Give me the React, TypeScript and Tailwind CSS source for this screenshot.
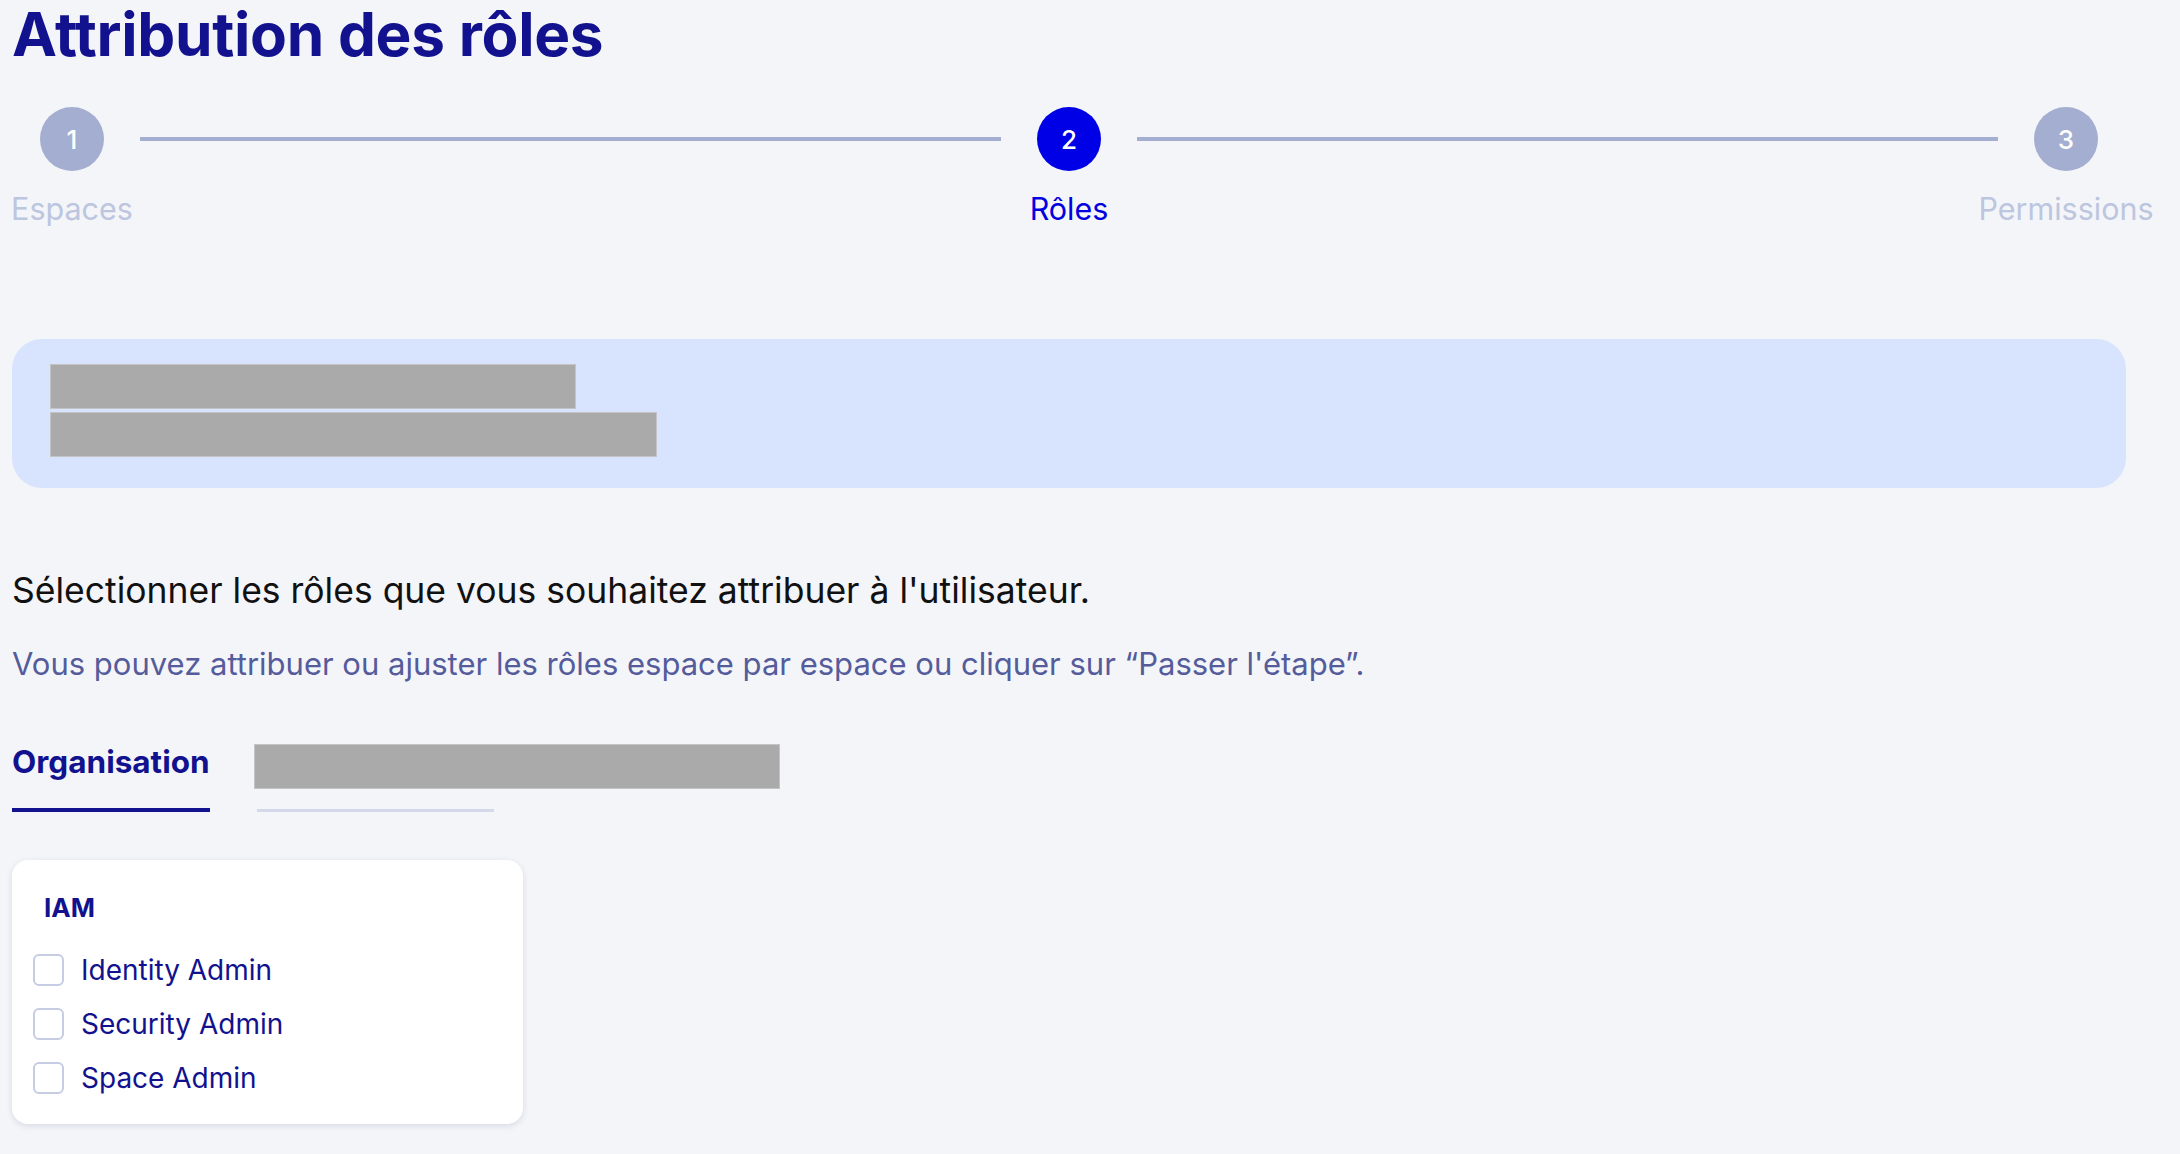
import { Fragment } from 'react';

const steps = [
  { n: 1, label: 'Espaces', state: 'done' },
  { n: 2, label: 'Rôles', state: 'active' },
  { n: 3, label: 'Permissions', state: 'todo' },
];

const roles = ['Identity Admin', 'Security Admin', 'Space Admin'];

function Stepper() {
  return (
    <div className="flex items-start mt-[37px] pr-[42px]">
      {steps.map((s, i) => (
        <Fragment key={s.n}>
          {i > 0 && <div className="flex-1 h-1 mt-[30px] mx-2 bg-[#a3aed0]" />}
          <div className="w-[120px] flex flex-col items-center">
            <div
              className={
                s.state === 'active'
                  ? 'w-16 h-16 rounded-full bg-[#0000e6] flex items-center justify-center text-white text-[26px] font-medium'
                  : 'w-16 h-16 rounded-full bg-[#a3aed0] flex items-center justify-center text-white text-[26px] font-medium'
              }
            >
              {s.n}
            </div>
            <div
              className={
                s.state === 'active'
                  ? 'mt-[20px] text-[30.5px] leading-[36px] whitespace-nowrap text-[#0000e0]'
                  : 'mt-[20px] text-[30.5px] leading-[36px] whitespace-nowrap text-[#bcc6df]'
              }
            >
              {s.label}
            </div>
          </div>
        </Fragment>
      ))}
    </div>
  );
}

export default function App() {
  return (
    <div className="min-h-screen bg-[#f4f5f9] px-3 pb-8 font-['Inter',_'Noto_Sans',_sans-serif]">
      <h1 className="text-[60.3px] leading-[70px] font-bold text-[#12128e] tracking-[-0.3px]">
        Attribution des rôles
      </h1>

      <Stepper />

      <div className="mt-[112px] mr-[42px] h-[149px] rounded-[30px] bg-[#d8e4fd] pl-[38px] pt-[25px]">
        <div className="w-[526px] h-[45px] bg-[#aaaaaa] border border-[#c4c4c4]" />
        <div className="w-[607px] h-[45px] mt-[3px] bg-[#aaaaaa] border border-[#c4c4c4]" />
      </div>

      <p className="mt-[81px] text-[35.5px] leading-[44px] text-[#111111]">
        Sélectionner les rôles que vous souhaitez attribuer à l'utilisateur.
      </p>
      <p className="mt-[31px] text-[31px] leading-[40px] text-[#555c9b]">
        Vous pouvez attribuer ou ajuster les rôles espace par espace ou cliquer sur “Passer l'étape”.
      </p>

      <div className="mt-[58px] flex items-end gap-[47px]">
        <div className="flex flex-col">
          <span className="text-[31.5px] leading-[40px] font-bold text-[#12128e]">Organisation</span>
          <div className="mt-[26px] h-1 bg-[#12128e]" />
        </div>
        <div className="flex flex-col">
          <div className="w-[526px] h-[45px] -ml-[3px] bg-[#aaaaaa] border border-[#c4c4c4]" />
          <div className="mt-[20px] w-[237px] h-[3px] bg-[#d3d9ea]" />
        </div>
      </div>

      <div className="mt-[48px] w-[511px] rounded-2xl bg-white shadow-[0_2px_6px_rgba(20,30,80,0.12)] pt-[32px] pb-[30px] px-[21px]">
        <div className="pl-[11px] text-[26px] leading-[32px] font-bold text-[#12128e]">IAM</div>
        <div className="mt-[30px] flex flex-col gap-[22px]">
          {roles.map((r) => (
            <label key={r} className="flex items-center gap-[17px]">
              <span className="w-[31px] h-[32px] rounded-md border-2 border-[#c5cce4] bg-white" />
              <span className="text-[28px] leading-[32px] text-[#12128e]">{r}</span>
            </label>
          ))}
        </div>
      </div>
    </div>
  );
}
